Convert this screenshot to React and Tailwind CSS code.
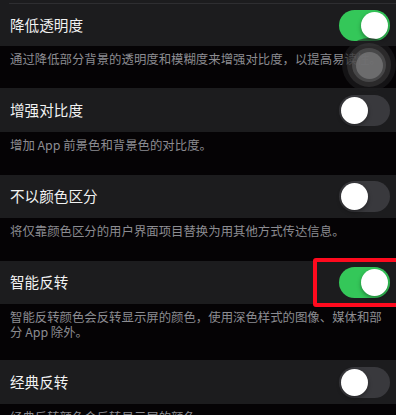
import React from "react";

function Toggle({ on }) {
  return (
    <div
      className={
        "relative w-[51px] h-[31px] rounded-full shrink-0 " +
        (on ? "bg-[#34c759]" : "bg-[#39393d]")
      }
    >
      <div
        className={
          "absolute top-[2px] w-[27px] h-[27px] rounded-full bg-white shadow-[0_2px_4px_rgba(0,0,0,0.35)] " +
          (on ? "left-[22px]" : "left-[2px]")
        }
      />
    </div>
  );
}

function Cell({ label, on, h }) {
  return (
    <div
      className={
        "flex items-center justify-between bg-[#1c1c1e] pl-[10px] pr-[6px] " + h
      }
    >
      <span className="text-[14.6px] text-[#f2f2f2] leading-none">
        {label}
      </span>
      <Toggle on={on} />
    </div>
  );
}

function Desc({ children, h }) {
  return (
    <div
      className={
        "bg-[#050305] pl-[10px] pr-[4px] pt-[6px] text-[12.4px] leading-[15px] text-[#8c8c91] whitespace-nowrap " +
        h
      }
    >
      {children}
    </div>
  );
}

export default function App() {
  return (
    <div
      className="relative w-[396px] h-[415px] overflow-hidden bg-[#050305]"
      style={{ fontFamily: '"Noto Sans CJK SC", "Noto Sans", sans-serif' }}
    >
      <div className="bg-[#1c1c1e] pl-[9px]">
        <div className="h-[3px]" />
      </div>
      <div className="bg-[#1c1c1e] pl-[9px]">
        <div className="h-px bg-[#2e2e31]" />
      </div>
      <Cell label="降低透明度" on h="h-[42px]" />
      <Desc h="h-[42px]">
        通过降低部分背景的透明度和模糊度来增强对比度，以提高易读性。
      </Desc>
      <Cell label="增强对比度" on={false} h="h-[44px]" />
      <Desc h="h-[43px]">增加 App 前景色和背景色的对比度。</Desc>
      <Cell label="不以颜色区分" on={false} h="h-[43px]" />
      <Desc h="h-[43px]">
        将仅靠颜色区分的用户界面项目替换为用其他方式传达信息。
      </Desc>
      <Cell label="智能反转" on h="h-[43px]" />
      <Desc h="h-[56px]">
        智能反转颜色会反转显示屏的颜色，使用深色样式的图像、媒体和部
        <br />
        分 App 除外。
      </Desc>
      <Cell label="经典反转" on={false} h="h-[44px]" />
      <Desc h="h-[40px]">经典反转颜色会反转显示屏的颜色。</Desc>

      {/* AssistiveTouch button overlay */}
      <div className="absolute left-[342px] top-[38px] w-[54px] h-[54px] rounded-full bg-[rgba(30,30,32,0.6)] flex items-center justify-center">
        <div className="w-[44px] h-[44px] rounded-full bg-[rgba(70,70,72,0.45)] flex items-center justify-center">
          <div className="w-[34px] h-[34px] rounded-full bg-[rgba(100,100,102,0.5)] flex items-center justify-center">
            <div className="w-[27px] h-[27px] rounded-full bg-[rgba(120,120,122,0.75)]" />
          </div>
        </div>
      </div>

      {/* Red highlight box */}
      <div className="absolute left-[313px] top-[258px] w-[92px] h-[49px] border-[4.5px] border-[#ff0a1e] rounded-[3px]" />
    </div>
  );
}
